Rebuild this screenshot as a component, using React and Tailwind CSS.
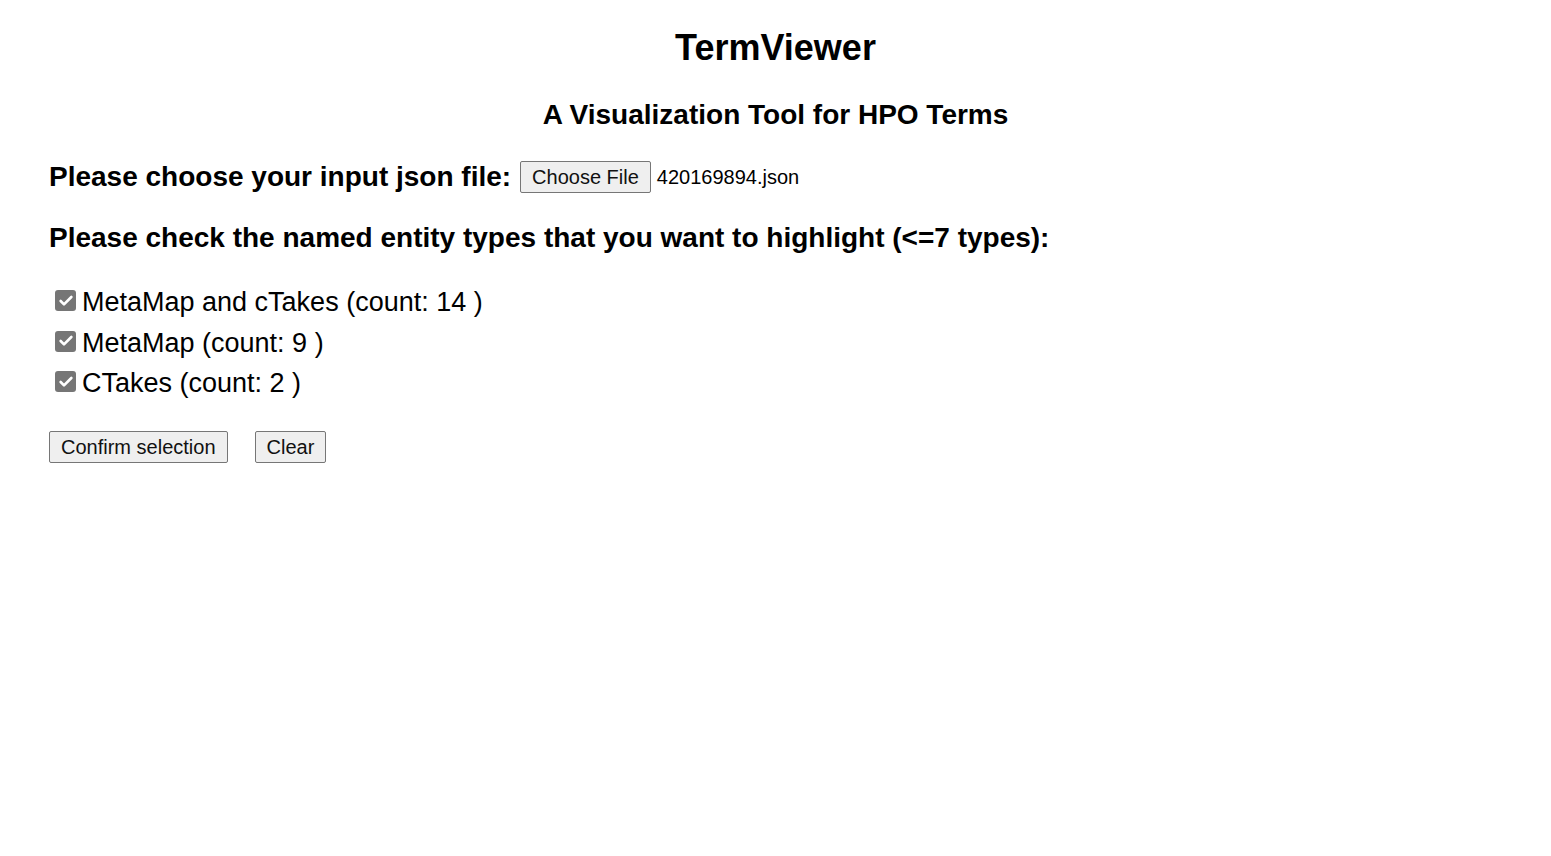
import { Check } from 'lucide-react';

const items = [
  { label: 'MetaMap and cTakes', count: 14 },
  { label: 'MetaMap', count: 9 },
  { label: 'CTakes', count: 2 },
];

const Box = () => (
  <span className="w-[21px] h-[21px] -mt-[3px] rounded-[3px] bg-[#767676] flex items-center justify-center shrink-0">
    <Check size={16} strokeWidth={4} color="white" />
  </span>
);

export default function App() {
  return (
    <div className="min-h-screen bg-white text-black px-[49px] pt-[28px]" style={{ fontFamily: '"Liberation Sans", Arial, sans-serif' }}>
      <h1 className="text-center text-[36px] font-bold leading-[40px]">TermViewer</h1>
      <h2 className="text-center text-[28px] font-bold leading-[32px] mt-[31px]">A Visualization Tool for HPO Terms</h2>

      <div className="flex items-center h-[32px] mt-[30px]">
        <span className="text-[28px] font-bold leading-[32px]">Please choose your input json file:</span>
        <button className="ml-[9px] h-[32px] px-[11px] bg-[#efefef] border border-[#767676] rounded-[2px] text-[20px] text-[#111]">Choose File</button>
        <span className="ml-[6px] text-[20px]">420169894.json</span>
      </div>

      <div className="text-[28px] font-bold leading-[32px] mt-[29px]">
        Please check the named entity types that you want to highlight (&lt;=7 types):
      </div>

      <div className="mt-[33px] ml-[6px] flex flex-col gap-[10.5px]">
        {items.map(it => (
          <label key={it.label} className="flex items-center gap-[6px] text-[27px] leading-[30px]">
            <Box />
            <span>{it.label} (count: {it.count} )</span>
          </label>
        ))}
      </div>

      <div className="flex items-center gap-[27px] mt-[33px]">
        <button className="h-[32px] px-[11px] bg-[#efefef] border border-[#767676] rounded-[2px] text-[20px] text-[#111]">Confirm selection</button>
        <button className="h-[32px] px-[11px] bg-[#efefef] border border-[#767676] rounded-[2px] text-[20px] text-[#111]">Clear</button>
      </div>
    </div>
  );
}
